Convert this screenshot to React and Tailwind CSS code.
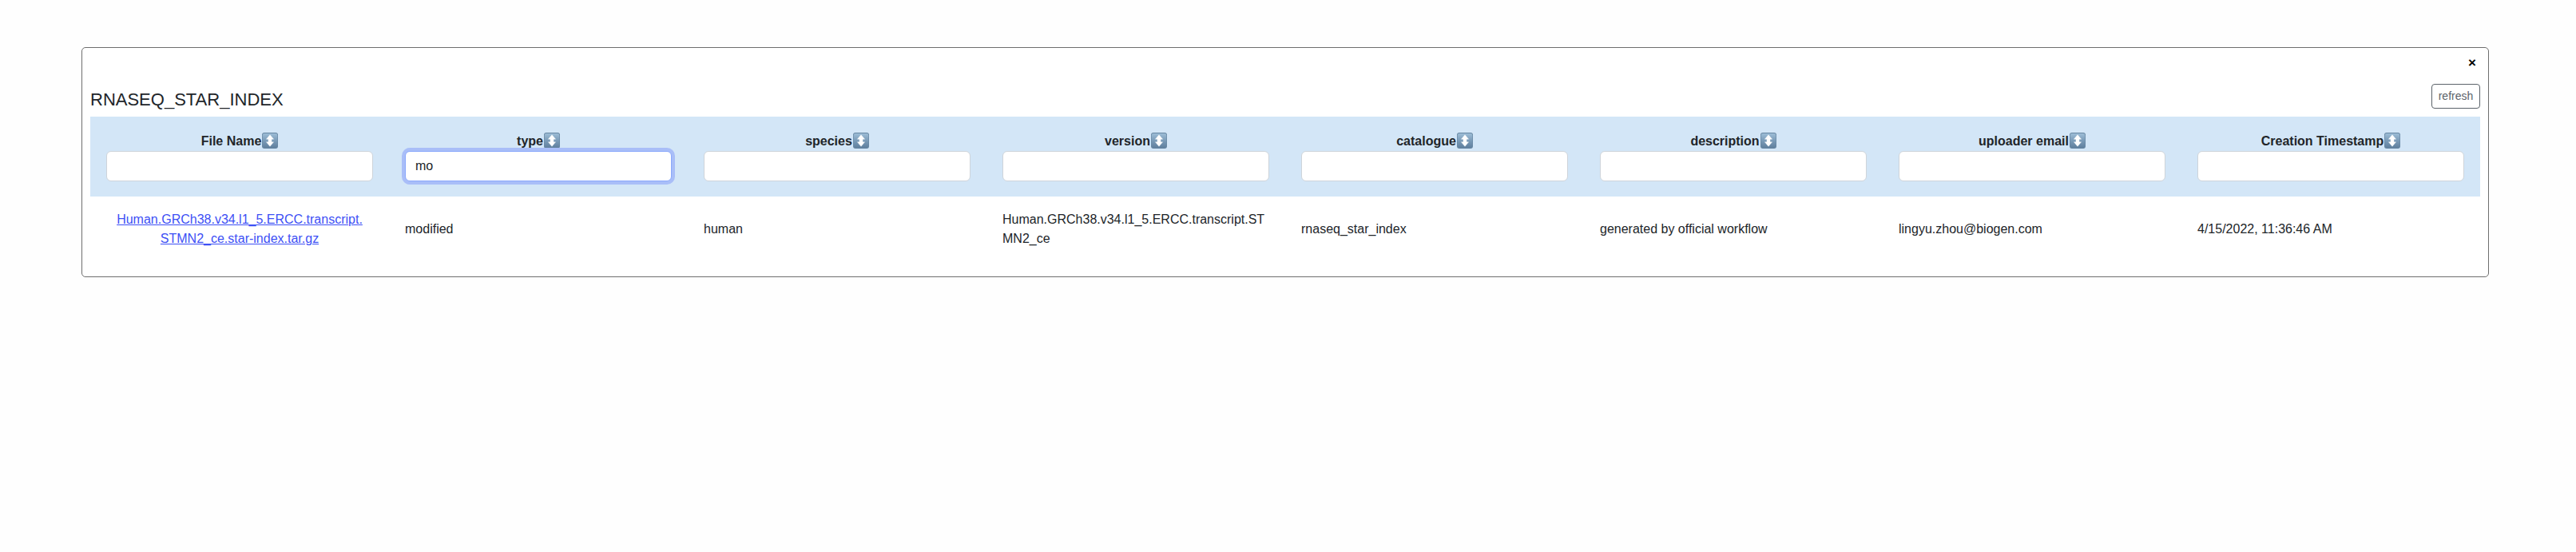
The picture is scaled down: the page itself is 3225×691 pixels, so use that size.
const columns = [
  { label: "File Name", filter: "", value: "Human.GRCh38.v34.l1_5.ERCC.transcript.STMN2_ce.star-index.tar.gz", link: true },
  { label: "type", filter: "mo", value: "modified" },
  { label: "species", filter: "", value: "human" },
  { label: "version", filter: "", value: "Human.GRCh38.v34.l1_5.ERCC.transcript.STMN2_ce" },
  { label: "catalogue", filter: "", value: "rnaseq_star_index" },
  { label: "description", filter: "", value: "generated by official workflow" },
  { label: "uploader email", filter: "", value: "lingyu.zhou@biogen.com" },
  { label: "Creation Timestamp", filter: "", value: "4/15/2022, 11:36:46 AM" },
];

function SortIcon() {
  return (
    <svg width="20" height="20" viewBox="0 0 20 20" className="shrink-0" aria-hidden="true">
      <defs>
        <linearGradient id="key" x1="0" y1="0" x2="0" y2="1">
          <stop offset="0" stopColor="#9dbdd6" />
          <stop offset="0.5" stopColor="#7a9bb8" />
          <stop offset="1" stopColor="#5f7f9d" />
        </linearGradient>
      </defs>
      <rect width="20" height="20" rx="3" fill="#6787a3" />
      <rect x="0.7" y="1" width="18.6" height="18.3" rx="2.4" fill="url(#key)" />
      <path d="M10 2.8 14.6 8.2H12v3.6h2.6L10 17.3 5.4 11.8H8V8.2H5.4Z" fill="#fff" stroke="#fff" strokeWidth="0.4" strokeLinejoin="round" />
    </svg>
  );
}

function HeaderCell({ column }) {
  const focused = column.filter !== "";
  return (
    <div className="flex flex-col px-5 pt-[18px]">
      <div className="mb-px flex h-6 items-center justify-center gap-px font-bold leading-6">
        <span className="mt-0.5 whitespace-nowrap">{column.label}</span>
        <SortIcon />
      </div>
      <input
        aria-label={column.label}
        defaultValue={column.filter}
        className={
          focused
            ? "h-[38px] w-full rounded-md border border-[#8aa8fb] bg-white px-3 shadow-[0_0_0_4px_#a9bef8] outline-none"
            : "h-[38px] w-full rounded-md border border-[#ced4da] bg-white px-3 outline-none"
        }
      />
    </div>
  );
}

export default function App() {
  return (
    <div className="min-h-[691px] bg-[#fefefe] pl-[102px] pr-[109px] pt-[59px] font-['Liberation_Sans',Arial,sans-serif] text-base text-[#212529]">
      <main className="flex h-[288px] flex-col rounded-[5px] border border-[#6e6e6e] bg-white px-[10px]">
        <div className="flex h-[45px] justify-end pr-[5px] pt-[7px]">
          <button className="h-6 text-[17px] font-bold leading-6 text-black">×</button>
        </div>
        <div className="flex h-[41px] items-start justify-between">
          <h1 className="pt-[6px] text-[22px] leading-[28px]">RNASEQ_STAR_INDEX</h1>
          <button className="h-[31px] w-[61px] rounded-[4px] border border-[#5c636a] text-sm leading-[21px] text-[#5c636a]">refresh</button>
        </div>
        <div className="grid h-[100px] grid-cols-8 bg-[#d3e6f7]">
          {columns.map((c) => (
            <HeaderCell key={c.label} column={c} />
          ))}
        </div>
        <div className="grid h-[82px] grid-cols-8 items-center leading-6">
          {columns.map((c) => (
            <div key={c.label} className="break-all px-5">
              {c.link ? (
                <a href="#file" className="block px-[13px] text-center text-[#3d50f5] underline">{c.value}</a>
              ) : (
                c.value
              )}
            </div>
          ))}
        </div>
      </main>
    </div>
  );
}
